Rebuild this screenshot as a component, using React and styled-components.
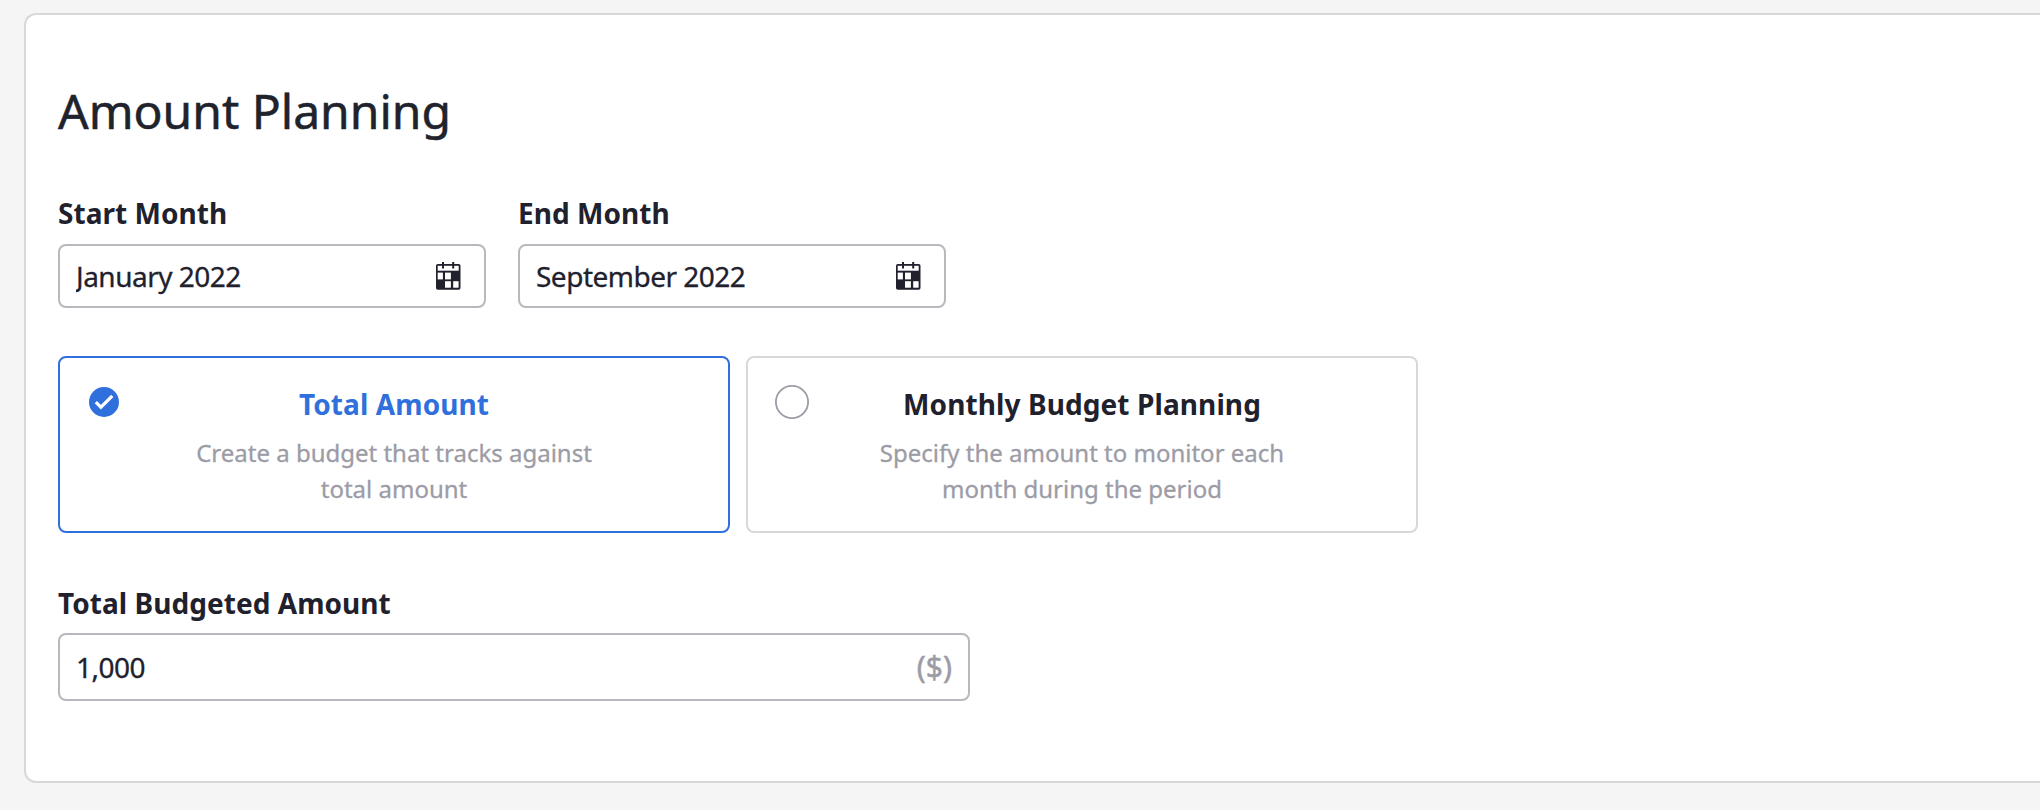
import React, { useState } from "react";
import styled, { createGlobalStyle } from "styled-components";

const GlobalStyle = createGlobalStyle`
  * { box-sizing: border-box; }
  body {
    margin: 0;
    background: #f5f5f5;
    color: #21212d;
    font-family: "Noto Sans", "Open Sans", sans-serif;
    font-size: 28px;
  }
`;

const Page = styled.main`
  min-height: 810px;
  padding: 13px 0 27px 24px;
`;

const Panel = styled.section`
  height: 770px;
  padding: 63px 32px 0;
  background: #fff;
  border: 2px solid #d8d8d8;
  border-right: none;
  border-radius: 12px 0 0 12px;
`;

const Title = styled.h1`
  margin: 0 0 50px;
  font-size: 48px;
  line-height: 65px;
  font-weight: 400;
  color: #20222c;
  -webkit-text-stroke: 0.5px currentColor;
`;

const MonthRow = styled.div`
  display: flex;
  gap: 32px;
  margin-bottom: 48px;
`;

const Field = styled.label`
  display: flex;
  flex-direction: column;
  gap: ${(p) => p.$gap}px;
  width: ${(p) => p.$width}px;
`;

const FieldLabel = styled.span`
  font-weight: 700;
  line-height: 40px;
  letter-spacing: 0.05px;
`;

const InputBox = styled.span`
  display: flex;
  align-items: center;
  height: ${(p) => p.$height}px;
  padding: 0 ${(p) => p.$padRight}px 0 16px;
  border: 2px solid #b8b8be;
  border-radius: 8px;
`;

const TextInput = styled.input`
  flex: 1;
  min-width: 0;
  height: 40px;
  padding: 0;
  border: none;
  outline: none;
  background: transparent;
  color: inherit;
  font: inherit;
  letter-spacing: -0.5px;
  -webkit-text-stroke: 0.3px currentColor;
`;

const Unit = styled.span`
  color: #9c9ca6;
  font-size: 30px;
  line-height: 40px;
  -webkit-text-stroke: 0.5px currentColor;
`;

const OptionRow = styled.div`
  display: flex;
  gap: 16px;
  margin-bottom: 50px;
`;

const Option = styled.button`
  display: grid;
  grid-template-columns: 34px 1fr 34px;
  align-items: start;
  width: 672px;
  height: 177px;
  padding: 26px 27px 0;
  background: #fff;
  border: 2px solid ${(p) => (p.$selected ? "#2f70dc" : "#d8d8d8")};
  border-radius: 8px;
  color: ${(p) => (p.$selected ? "#2f70dc" : "#21212d")};
  font: inherit;
  text-align: center;
`;

const OptionMark = styled.svg`
  display: block;
  width: 34px;
  height: 34px;
  margin-top: 1px;
`;

const OptionText = styled.span`
  display: flex;
  flex-direction: column;
  align-items: center;
  gap: 11px;
`;

const OptionTitle = styled.span`
  font-weight: 700;
  line-height: 40px;
  letter-spacing: 0.1px;
`;

const OptionDescription = styled.span`
  max-width: 420px;
  font-size: 24px;
  line-height: 36px;
  color: #9c9ca6;
  -webkit-text-stroke: 0.3px currentColor;
`;

const CalendarSvg = styled.svg`
  display: block;
  flex: none;
  width: 25px;
  height: 28px;
`;

function CalendarIcon() {
  return (
    <CalendarSvg viewBox="0 0 25 28" aria-hidden="true">
      <rect x="0" y="2" width="24.5" height="25.8" rx="1.8" fill="#21212d" />
      <g fill="#fff">
        <rect x="1.7" y="3.8" width="21" height="4.9" />
        <rect x="1.7" y="10.6" width="5.2" height="6.8" />
        <rect x="9" y="10.6" width="5.9" height="6.8" />
        <rect x="9" y="19.2" width="5.9" height="6.5" />
        <rect x="17.2" y="19.2" width="5.4" height="6.5" />
      </g>
      <path d="M7 0v6.4M17.2 0v6.4" stroke="#21212d" strokeWidth="2" />
    </CalendarSvg>
  );
}

function Mark({ selected }) {
  return (
    <OptionMark viewBox="0 0 34 34" aria-hidden="true">
      {selected ? (
        <>
          <circle cx="17" cy="17" r="15" fill="#2f70dc" />
          <path d="M8.8 17.1L13.9 22.2L25.3 10.9" fill="none" stroke="#fff" strokeWidth="3.2" />
        </>
      ) : (
        <circle cx="17" cy="17" r="16.1" fill="#fff" stroke="#9c9ca6" strokeWidth="1.8" />
      )}
    </OptionMark>
  );
}

function MonthField({ label, value }) {
  return (
    <Field $width={428} $gap={11}>
      <FieldLabel>{label}</FieldLabel>
      <InputBox $height={64} $padRight={23}>
        <TextInput defaultValue={value} />
        <CalendarIcon />
      </InputBox>
    </Field>
  );
}

const OPTIONS = [
  {
    id: "total",
    title: "Total Amount",
    description: "Create a budget that tracks against total amount",
  },
  {
    id: "monthly",
    title: "Monthly Budget Planning",
    description: "Specify the amount to monitor each month during the period",
  },
];

export default function App() {
  const [plan, setPlan] = useState("total");
  return (
    <>
      <GlobalStyle />
      <Page>
        <Panel>
          <Title>Amount Planning</Title>
          <MonthRow>
            <MonthField label="Start Month" value="January 2022" />
            <MonthField label="End Month" value="September 2022" />
          </MonthRow>
          <OptionRow>
            {OPTIONS.map((o) => (
              <Option key={o.id} type="button" $selected={plan === o.id} onClick={() => setPlan(o.id)}>
                <Mark selected={plan === o.id} />
                <OptionText>
                  <OptionTitle>{o.title}</OptionTitle>
                  <OptionDescription>{o.description}</OptionDescription>
                </OptionText>
              </Option>
            ))}
          </OptionRow>
          <Field $width={912} $gap={10}>
            <FieldLabel>Total Budgeted Amount</FieldLabel>
            <InputBox $height={68} $padRight={16}>
              <TextInput defaultValue="1,000" />
              <Unit>($)</Unit>
            </InputBox>
          </Field>
        </Panel>
      </Page>
    </>
  );
}
